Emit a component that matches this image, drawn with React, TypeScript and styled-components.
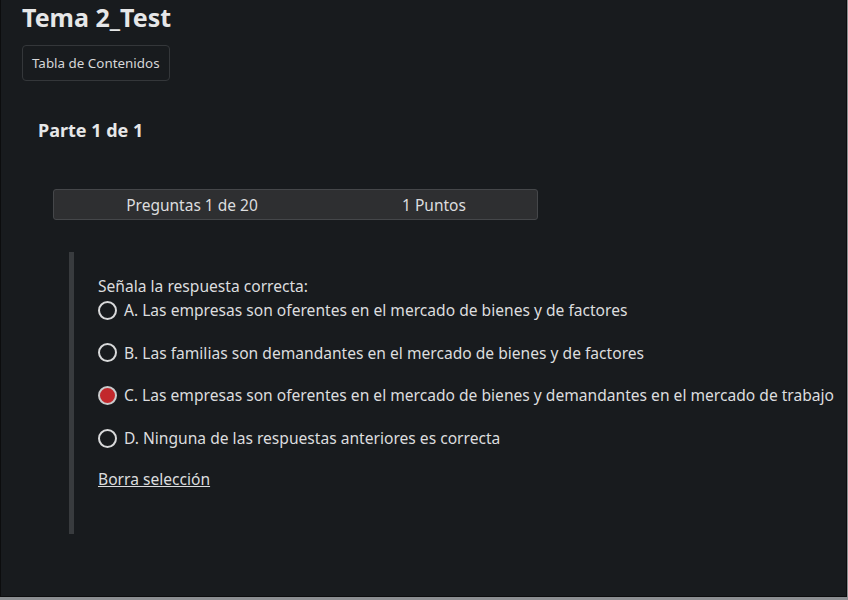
import * as React from 'react'
import styled, { createGlobalStyle } from 'styled-components'

const GlobalStyle = createGlobalStyle`
    html, body {
        margin: 0;
        padding: 0;
        background: #8c8f92;
    }
    body {
        font-family: "Noto Sans", "Open Sans", sans-serif;
    }
`

type Option = {
    label: string;
    selected?: boolean;
}

const options: Option[] = [
    { label: 'A. Las empresas son oferentes en el mercado de bienes y de factores' },
    { label: 'B. Las familias son demandantes en el mercado de bienes y de factores' },
    { label: 'C. Las empresas son oferentes en el mercado de bienes y demandantes en el mercado de trabajo', selected: true },
    { label: 'D. Ninguna de las respuestas anteriores es correcta' },
]

const App = () => {
    return (
        <>
            <GlobalStyle />
            <Frame>
                <Title>Tema 2_Test</Title>
                <TocButton>Tabla de Contenidos</TocButton>
                <PartTitle>Parte 1 de 1</PartTitle>
                <InfoBar>
                    <InfoCell>Preguntas 1 de 20</InfoCell>
                    <InfoCell>1 Puntos</InfoCell>
                </InfoBar>
                <Question>
                    <Prompt>Señala la respuesta correcta:</Prompt>
                    <OptionList>
                        {options.map((o) => (
                            <OptionRow key={o.label}>
                                <Radio selected={o.selected} />
                                <span>{o.label}</span>
                            </OptionRow>
                        ))}
                    </OptionList>
                    <ClearLink>Borra selección</ClearLink>
                </Question>
            </Frame>
        </>
    )
}

const Frame = styled.div`
    box-sizing: border-box;
    width: 847px;
    height: 597px;
    background: #181b1e;
    border-left: 1px solid #0c0d0e;
    border-right: 1px solid #0c0d0e;
    border-bottom: 1px solid #0c0d0e;
    padding: 0 0 0 21px;
    color: #e2e3e4;
    overflow: hidden;
`

const Title = styled.h1`
    font-size: 25px;
    font-weight: 700;
    margin: 0;
    line-height: 34px;
    color: #e6e7e8;
`

const TocButton = styled.div`
    display: inline-block;
    margin-top: 11px;
    box-sizing: border-box;
    height: 36px;
    padding: 0 9px;
    line-height: 34px;
    font-size: 13.4px;
    color: #d6d7d8;
    border: 1px solid #34373a;
    border-radius: 4px;
`

const PartTitle = styled.h2`
    font-size: 18px;
    font-weight: 700;
    margin: 36px 0 0 16px;
    line-height: 26px;
    color: #e6e7e8;
`

const InfoBar = styled.div`
    box-sizing: border-box;
    display: grid;
    grid-template-columns: 242px 242px;
    width: 485px;
    height: 31px;
    margin: 46px 0 0 31px;
    padding-left: 17px;
    background: #2e2f31;
    border: 1px solid #45474a;
    border-radius: 3px;
    align-items: center;
    font-size: 15.5px;
    color: #dcdddf;
    overflow: hidden;
`

const InfoCell = styled.div`
    text-align: center;
    white-space: nowrap;
`

const Question = styled.div`
    margin: 32px 0 0 47px;
    height: 282px;
    border-left: 5px solid #383b3e;
    padding-left: 24px;
    padding-top: 23px;
    box-sizing: border-box;
    font-size: 15.6px;
    color: #dcdddf;
`

const Prompt = styled.div`
    line-height: 22px;
    margin-bottom: 2px;
`

const OptionList = styled.div`
    display: flex;
    flex-direction: column;
    gap: 20.7px;
`

const OptionRow = styled.div`
    display: flex;
    align-items: center;
    gap: 7px;
    line-height: 22px;
    white-space: nowrap;
`

const Radio = styled.span<{ selected?: boolean }>`
    box-sizing: border-box;
    width: 19px;
    height: 19px;
    border-radius: 50%;
    border: 2px solid ${(p) => (p.selected ? '#c9cacb' : '#d8d9da')};
    background: ${(p) => (p.selected ? '#c2282c' : 'transparent')};
    flex: none;
`

const ClearLink = styled.div`
    margin-top: 19px;
    text-decoration: underline;
    line-height: 22px;
    color: #dcdddf;
`

export default App
